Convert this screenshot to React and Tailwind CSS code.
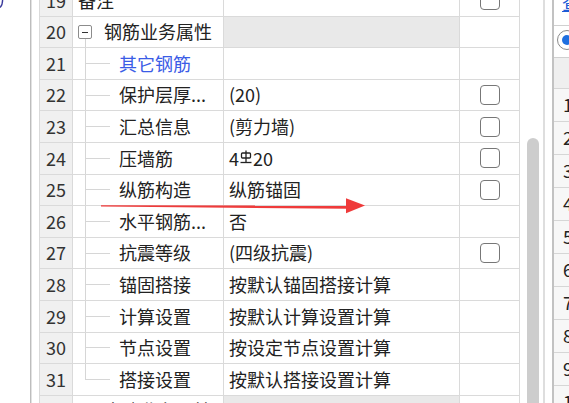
import React from "react";

const LINE = "border-[#dadada]";

const rows = [
  { n: 19, kind: "plain", name: "备注", check: true },
  { n: 20, kind: "group", name: "钢筋业务属性", gray: true },
  { n: 21, kind: "child", name: "其它钢筋", blue: true },
  { n: 22, kind: "child", name: "保护层厚...", value: "(20)", check: true },
  { n: 23, kind: "child", name: "汇总信息", value: "(剪力墙)", check: true },
  { n: 24, kind: "child", name: "压墙筋", value: "REBAR", check: true },
  { n: 25, kind: "child", name: "纵筋构造", value: "纵筋锚固", check: true },
  { n: 26, kind: "child", name: "水平钢筋...", value: "否" },
  { n: 27, kind: "child", name: "抗震等级", value: "(四级抗震)", check: true },
  { n: 28, kind: "child", name: "锚固搭接", value: "按默认锚固搭接计算" },
  { n: 29, kind: "child", name: "计算设置", value: "按默认计算设置计算" },
  { n: 30, kind: "child", name: "节点设置", value: "按设定节点设置计算" },
  { n: 31, kind: "child", name: "搭接设置", value: "按默认搭接设置计算", last: true },
  { n: 32, kind: "group", name: "土建业务属性", gray: true },
];

function RebarSymbol() {
  return (
    <svg width="12" height="14" viewBox="0 0 12 14" className="mx-[1px] -mt-[2px]">
      <rect x="1.5" y="3" width="9" height="5" rx="1" fill="none" stroke="#222" strokeWidth="1.3" />
      <line x1="6" y1="0.5" x2="6" y2="12.5" stroke="#222" strokeWidth="1.3" />
      <line x1="0.5" y1="12.5" x2="11.5" y2="12.5" stroke="#222" strokeWidth="1.3" />
    </svg>
  );
}

function Checkbox() {
  return <div className="w-[20px] h-[20px] border-[1.5px] border-[#777777] rounded-[4px] bg-white" />;
}

function NameCell({ r }) {
  if (r.kind === "plain") {
    return (
      <div className="flex items-center h-full pl-[5px] whitespace-nowrap text-[#222]">{r.name}</div>
    );
  }
  if (r.kind === "group") {
    return (
      <div className="flex items-stretch pl-[5px] h-full">
        <div className="w-[14px] flex flex-col items-center">
          <div className="flex-1 w-px" />
          <div className="w-[14px] h-[14px] shrink-0 border border-[#8c8c8c] rounded-[2px] bg-white flex items-center justify-center">
            <div className="w-[6px] h-px bg-[#333333]" />
          </div>
          <div className={r.n === 20 ? "flex-1 w-px bg-[#d4d4d4]" : "flex-1 w-px"} />
        </div>
        <span className="ml-[12px] self-center whitespace-nowrap text-[#222]">{r.name}</span>
      </div>
    );
  }
  return (
    <div className="flex items-stretch h-full">
      <div className="w-[12px] shrink-0" />
      <div className="w-[25px] shrink-0 flex flex-col">
        <div className="flex-1 border-l border-b border-[#d6d6d6]" />
        <div className={r.last ? "flex-1" : "flex-1 border-l border-[#d6d6d6]"} />
      </div>
      <span
        className={
          r.blue
            ? "ml-[9px] self-center whitespace-nowrap text-[#3b5ce6]"
            : "ml-[9px] self-center whitespace-nowrap text-[#222]"
        }
      >
        {r.name}
      </span>
    </div>
  );
}

function Row({ r }) {
  return (
    <div className={`flex shrink-0 h-[31.6px] border-b ${LINE}`}>
      <div className={`w-[33px] shrink-0 border-r ${LINE} bg-[#f0f0f0] flex items-center justify-center text-[#333]`}>
        {r.n}
      </div>
      <div className={`w-[151px] shrink-0 border-r ${LINE} bg-white`}>
        <NameCell r={r} />
      </div>
      <div
        className={
          r.gray
            ? `w-[236px] shrink-0 border-r ${LINE} bg-[#e9e9e9] pl-[5px] flex items-center whitespace-nowrap text-[#222]`
            : `w-[236px] shrink-0 border-r ${LINE} bg-white pl-[5px] flex items-center whitespace-nowrap text-[#222]`
        }
      >
        {r.value === "REBAR" ? (
          <span className="flex items-center">
            4<RebarSymbol />20
          </span>
        ) : (
          r.value
        )}
      </div>
      <div className={`w-[60px] shrink-0 border-r ${LINE} bg-white flex items-center justify-center`}>
        {r.check ? <Checkbox /> : null}
      </div>
    </div>
  );
}

export default function App() {
  const rightNums = [1, 2, 3, 4, 5, 6, 7, 8, 9, 10];
  return (
    <div className="relative w-[569px] h-[403px] overflow-hidden bg-white flex font-['Noto_Sans_CJK_SC','Microsoft_YaHei',sans-serif] text-[18px] leading-[1.2]">
      {/* left margin */}
      <div className="w-[30px] shrink-0 bg-white">
        <svg width="5" height="9" viewBox="0 0 5 9">
          <path d="M0 7.5 Q2.6 5 2.6 0" fill="none" stroke="#3a3a9c" strokeWidth="1.4" />
        </svg>
      </div>
      <div className="w-px shrink-0 bg-[#bdbdbd]" />
      <div className="w-px shrink-0 bg-[#e2e2e2]" />
      <div className="w-[7px] shrink-0 bg-white" />

      {/* property table */}
      <div className={`w-[481px] shrink-0 border-l ${LINE} -mt-[14.9px] flex flex-col`}>
        {rows.map((r) => (
          <Row key={r.n} r={r} />
        ))}
      </div>

      {/* scrollbar */}
      <div className="w-[23px] shrink-0 bg-white flex flex-col">
        <div className="h-[138px] shrink-0" />
        <div className="ml-[7px] w-[12px] flex-1 rounded-t-full bg-[#cdcdcd]" />
      </div>
      <div className="w-[2px] shrink-0 bg-[#dedede]" />
      <div className="w-[7px] shrink-0 bg-white" />
      <div className="w-[2px] shrink-0 bg-[#c2c2c2]" />

      {/* right panel */}
      <div className="flex-1 flex flex-col bg-white">
        <div className="h-[25px] shrink-0 overflow-hidden pl-[8px]">
          <span className="block -mt-[7px] leading-[18px] text-[#1c5bd6] underline whitespace-nowrap">查询</span>
        </div>
        <div className="h-[32px] shrink-0 border-t border-[#d0d0d0] pl-[3px] pt-[4px]">
          <div className="w-[20px] h-[20px] rounded-full border-[1.5px] border-[#8a8a8a] bg-white flex items-center justify-center">
            <div className="w-[10px] h-[10px] rounded-full bg-[#1e6fe0]" />
          </div>
        </div>
        <div className="h-[31px] shrink-0 border-t border-[#d0d0d0] bg-[#efefef]" />
        {rightNums.map((n) => (
          <div
            key={n}
            className="h-[33px] shrink-0 border-t border-[#d6d6d6] bg-[#f7f7f7] pl-[9px] flex items-center text-[#222] whitespace-nowrap"
          >
            {n}
          </div>
        ))}
      </div>

      {/* red annotation arrow */}
      <svg
        className="absolute left-0 top-0 pointer-events-none"
        width="569"
        height="403"
        viewBox="0 0 569 403"
      >
        <polygon points="101,205.2 347,205.5 347,208.8 101,206.4" fill="#ef3b3b" />
        <polygon points="346,198.3 365,205.6 346,213.3" fill="#ef3b3b" />
      </svg>
    </div>
  );
}
